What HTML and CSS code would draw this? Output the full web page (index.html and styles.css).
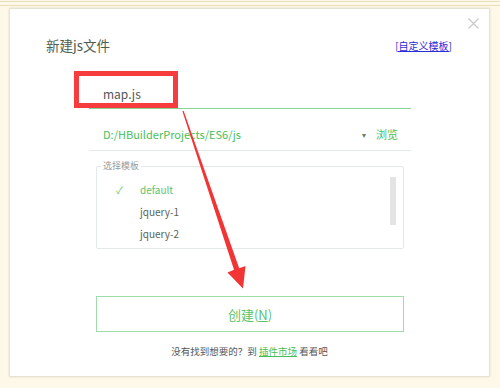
FILE: index.html
```html
<!DOCTYPE html>
<html lang="zh-CN">
<head>
  <meta charset="UTF-8" />
  <title>新建js文件</title>
  <link rel="stylesheet" href="styles.css">
</head>
<body>

  <div class="top-bar"></div>

  <div class="dialog">
    <span class="close">
      <svg width="11" height="11" viewBox="0 0 11 11"><path d="M0.5 0.5L10.5 10.5M10.5 0.5L0.5 10.5" stroke="#c9c9c9" stroke-width="1.2" fill="none"/></svg>
    </span>

    <div class="title-row">
      <span class="title">新建js文件</span>
      <a class="tpl-link">[自定义模板]</a>
    </div>

    <div class="form">
      <!-- 文件名 -->
      <div class="name-field">
        <span class="name-text">map.js</span>
        <span class="mark-box"></span>
      </div>

      <!-- 路径 -->
      <div class="path-row">
        <span class="path-text">D:/HBuilderProjects/ES6/js</span>
        <span class="caret">▾</span>
        <span class="browse">浏览</span>
      </div>

      <fieldset class="tpl-box">
        <legend>选择模板</legend>
        <div class="tpl-body">
          <ul class="tpl-list">
            <li class="active"><span class="check">✓</span>default</li>
            <li><span class="check"></span>jquery-1</li>
            <li><span class="check"></span>jquery-2</li>
          </ul>
          <div class="scroll"></div>
        </div>
      </fieldset>

      <button class="create">创建(<u>N</u>)</button>
    </div>

    <p class="hint">没有找到想要的？到 <a>插件市场</a> 看看吧</p>
  </div>

  <svg class="arrow" width="500" height="388" viewBox="0 0 500 388">
    <polygon points="182.4,111.2 183.6,110.8 239.2,268.2 245.5,266 243,288.5 227.5,272.5 234,269.8" fill="#f23434"/>
  </svg>

</body>
</html>
```

FILE: styles.css
```css
body {
  margin: 0;
  background: #fdf8e7;
  font-family: "Noto Sans CJK SC", "Noto Sans", sans-serif;
  width: 500px;
  height: 388px;
  position: relative;
  overflow: hidden;
}

.top-bar {
  height: 3px;
  margin-top: 1px;
  border-top: 1px solid #eadfb8;
  border-bottom: 1px solid #eadfb8;
}

.dialog {
  position: relative;
  margin: 3px 0 0 10px;
  width: 479px;
  height: 367px;
  background: #fff;
  box-shadow: 0 0 2px 1px rgba(0,0,0,0.13);
  padding-top: 26px;
  box-sizing: border-box;
}

.close {
  position: absolute;
  top: 9px;
  right: 10px;
  line-height: 0;
}

.title-row {
  display: flex;
  justify-content: space-between;
  align-items: center;
  height: 20px;
  padding: 0 37px 0 36px;
}

.title {
  font-size: 13.5px;
  color: #4f5d50;
}

.tpl-link {
  font-size: 10px;
  color: #2b2bd8;
  text-decoration: underline;
}

.form {
  width: 322px;
  margin: 22px 0 0 79px;
}

.name-field {
  position: relative;
  height: 31px;
  border-bottom: 1px solid #86d393;
  display: flex;
  align-items: center;
  padding-left: 14px;
}

.name-text {
  font-size: 12px;
  color: #555;
  padding-top: 1px;
}

.mark-box {
  position: absolute;
  left: -15px;
  top: -6px;
  width: 104px;
  height: 37px;
  border: 5px solid #f63c3c;
  box-sizing: border-box;
}

.path-row {
  height: 42px;
  box-sizing: border-box;
  padding: 9px 13px 0 14px;
  border-bottom: 1px solid #e3e8e8;
  display: flex;
  align-items: center;
  color: #46be5c;
}

.path-text {
  font-size: 11px;
  flex: 1;
}

.caret {
  font-size: 8px;
  color: #6c7a6c;
  margin-right: 10px;
}

.browse {
  font-size: 11px;
}

.tpl-box {
  margin: 9px 0 0 7px;
  width: 308px;
  box-sizing: border-box;
  padding: 0 0 4px 0;
  border: 1px solid #e3e8e8;
  border-radius: 2px;
  min-inline-size: 0;
}

.tpl-box legend {
  font-size: 9px;
  color: #9a9a9a;
  line-height: 12px;
  padding: 0 2px;
  margin-left: 4px;
}

.tpl-body {
  display: flex;
}

.tpl-list {
  list-style: none;
  margin: 0;
  padding: 6px 0 0 19px;
  flex: 1;
}

.tpl-list li {
  height: 22px;
  display: flex;
  align-items: center;
  font-size: 10px;
  color: #566356;
}

.tpl-list li.active {
  color: #5cc46e;
}

.check {
  width: 24px;
  font-size: 10px;
  color: #5cc46e;
}

.scroll {
  width: 6px;
  height: 48px;
  margin: 5px 7px 0 0;
  background: #e4e4e4;
}

.create {
  display: block;
  margin: 47px 0 0 7px;
  width: 308px;
  height: 36px;
  background: #fff;
  border: 1px solid #9fdcab;
  color: #58c46c;
  font-family: inherit;
  font-size: 13px;
}

.create u {
  text-decoration-thickness: 1px;
}

.hint {
  margin: 12px 0 0;
  text-align: center;
  font-size: 9.5px;
  line-height: 14px;
  color: #555;
}

.hint a {
  color: #46be5c;
  text-decoration: underline;
}

.arrow {
  position: absolute;
  left: 0;
  top: 0;
  pointer-events: none;
}
```
